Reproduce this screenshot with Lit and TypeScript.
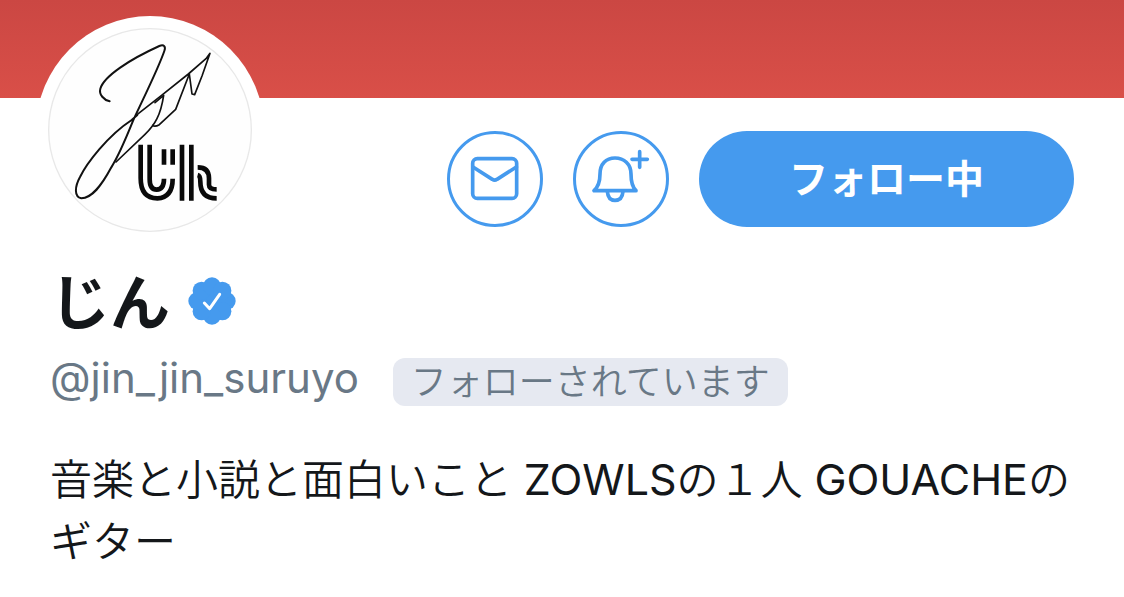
import { LitElement, html, css, svg } from "lit";
import { customElement, property } from "lit/decorators.js";

const LOBES = Array.from({ length: 8 }, (_, i) => (i * Math.PI) / 4);

@customElement("verified-badge")
class VerifiedBadge extends LitElement {
  static styles = css`
    :host {
      display: block;
      flex: none;
    }
    .mark {
      display: block;
      width: 48px;
      height: 48px;
      fill: #459aee;
    }
    .tick {
      fill: none;
      stroke: #fff;
      stroke-width: 9;
      stroke-linecap: round;
      stroke-linejoin: round;
    }
  `;
  render() {
    return html`<svg class="mark" viewBox="-72 -72 144 144" role="img" aria-label="認証済みアカウント">
      <circle r="56" />
      ${LOBES.map((a) => svg`<circle cx=${44 * Math.cos(a)} cy=${44 * Math.sin(a)} r="27" />`)}
      <path class="tick" d="M-23 6 L-7 23 L23 -20" />
    </svg>`;
  }
}

@customElement("profile-avatar")
class ProfileAvatar extends LitElement {
  static styles = css`
    :host {
      display: block;
      flex: none;
      box-sizing: border-box;
      padding: 12px;
      border-radius: 50%;
      background: #fff;
    }
    .art {
      display: block;
      width: 204px;
      height: 204px;
    }
    .rim {
      fill: #fefefe;
      stroke: #e8e8e8;
      stroke-width: 4;
    }
    .pen {
      fill: none;
      stroke: #111;
      stroke-width: 6;
      stroke-linecap: round;
      stroke-linejoin: round;
    }
    .thin {
      stroke-width: 5;
    }
    .mark {
      fill: none;
      stroke: #0a0a0a;
      stroke-width: 14;
    }
  `;
  render() {
    return html`<svg class="art" viewBox="54 84 612 612" role="img" aria-label="じんのプロフィール画像">
      <circle class="rim" cx="360" cy="390" r="304" />
      <path class="pen" d="M239 304 C222 300 206 284 211 266 C222 228 300 178 388 138 C402 132 408 140 403 153 C385 205 345 285 311 358 C290 410 268 465 244 502 C214 558 186 594 154 595 C132 590 134 560 150 531 C170 490 232 408 305 360 L322 345" />
      <path class="pen thin" d="M322 343 L390 290 L475 222 L528 176 L540 160 L516 228 L494 284 L486 282 L478 222 L437 328 L388 374 Q374 382 368 376" />
      <path class="pen thin" d="M375 308 L401 286 C392 345 375 375 345 403 L258 486" />
      <path class="mark" d="M332 434 V535 Q332 595 382 595 Q428 592 428 536" />
      <path class="mark" d="M359 434 V538 Q359 569 380 569 Q402 568 402 536" />
      <path class="mark" d="M402 448 V494 M428 448 V494 M456 434 V602 M484 434 V602" />
      <path class="mark" d="M503 502 Q537 502 537 535 V554 Q537 568 560 568" />
      <path class="mark" d="M503 525 Q511 527 511 545 Q511 595 560 595" />
    </svg>`;
  }
}

@customElement("app-root")
class AppRoot extends LitElement {
  @property() name = "じん";
  @property() handle = "@jin_jin_suruyo";
  @property() bio = "音楽と小説と面白いこと ZOWLSの１人 GOUACHEのギター";

  static styles = css`
    :host {
      display: block;
      background: #fff;
      color: #14171a;
      font-family: Inter, "Noto Sans CJK JP", sans-serif;
    }
    .banner {
      height: 98px;
      background: linear-gradient(#cb4743, #d94f48);
    }
    .profile {
      padding: 0 50px 24px;
    }
    .top {
      display: flex;
      align-items: flex-end;
      justify-content: space-between;
      margin: -82px 0 0 -14px;
    }
    .actions {
      display: flex;
      gap: 30px;
      padding-bottom: 17px;
    }
    .round {
      box-sizing: border-box;
      width: 96px;
      height: 96px;
      padding: 0;
      border: 3px solid #459aee;
      border-radius: 50%;
      background: #fff;
      cursor: pointer;
    }
    .icon {
      display: block;
      width: 90px;
      height: 90px;
      fill: none;
      stroke: #459aee;
      stroke-width: 11;
      stroke-linecap: round;
      stroke-linejoin: round;
    }
    .follow {
      width: 375px;
      height: 96px;
      padding: 0;
      border: 0;
      border-radius: 48px;
      background: #459aee;
      color: #fff;
      font: 700 39px/56px Inter, "Noto Sans CJK JP", sans-serif;
      cursor: pointer;
    }
    .title {
      display: flex;
      align-items: center;
      gap: 18px;
      margin-top: 15px;
    }
    .name {
      margin: 0;
      padding-top: 4px;
      font-size: 60px;
      line-height: 80px;
      font-weight: 700;
    }
    .meta {
      display: flex;
      align-items: flex-start;
      gap: 34px;
      margin-top: 11px;
      color: #697886;
    }
    .handle {
      color: inherit;
      text-decoration: none;
      font-size: 42px;
      line-height: 48px;
    }
    .tag {
      margin-top: 4px;
      padding: 0 18px;
      border-radius: 12px;
      background: #e6e9f1;
      font-size: 36px;
      line-height: 48px;
      font-weight: 350;
    }
    .bio {
      margin: 43px 0 0;
      font-size: 42px;
      line-height: 62px;
      font-weight: 350;
    }
    .latin {
      font-size: 43px;
      line-height: 1;
      font-weight: 400;
    }
  `;

  render() {
    return html`
      <header class="banner"></header>
      <main class="profile">
        <div class="top">
          <profile-avatar></profile-avatar>
          <div class="actions">
            <button class="round" aria-label="メッセージ">
              <svg class="icon" viewBox="30 42 270 270">
                <rect x="98" y="116" width="132" height="119" rx="14" />
                <path d="M99 141 L157 178 Q164 183 171 178 L229 141" />
              </svg>
            </button>
            <button class="round" aria-label="通知">
              <svg class="icon" viewBox="408 42 270 270">
                <path d="M462 212 H588 C578 202 573 190 573 162 C573 132 552 114 525 114 C498 114 480 132 480 162 C480 190 473 202 462 212 Z" />
                <path d="M502 214 Q504 241 525 241 Q547 241 549 214" />
                <path d="M599 95 V142 M576 118 H622" />
              </svg>
            </button>
            <button class="follow">フォロー中</button>
          </div>
        </div>
        <div class="title">
          <h1 class="name">${this.name}</h1>
          <verified-badge></verified-badge>
        </div>
        <div class="meta">
          <a class="handle" href="#">${this.handle}</a>
          <span class="tag">フォローされています</span>
        </div>
        <p class="bio">${this.bio
          .split(/([A-Z]+|[ァ-ー]+)/)
          .filter((run) => run)
          .map((run) => html`<span class=${/^[A-Z]+$/.test(run) ? "latin" : "kana"}>${run}</span>`)}</p>
      </main>
    `;
  }
}
